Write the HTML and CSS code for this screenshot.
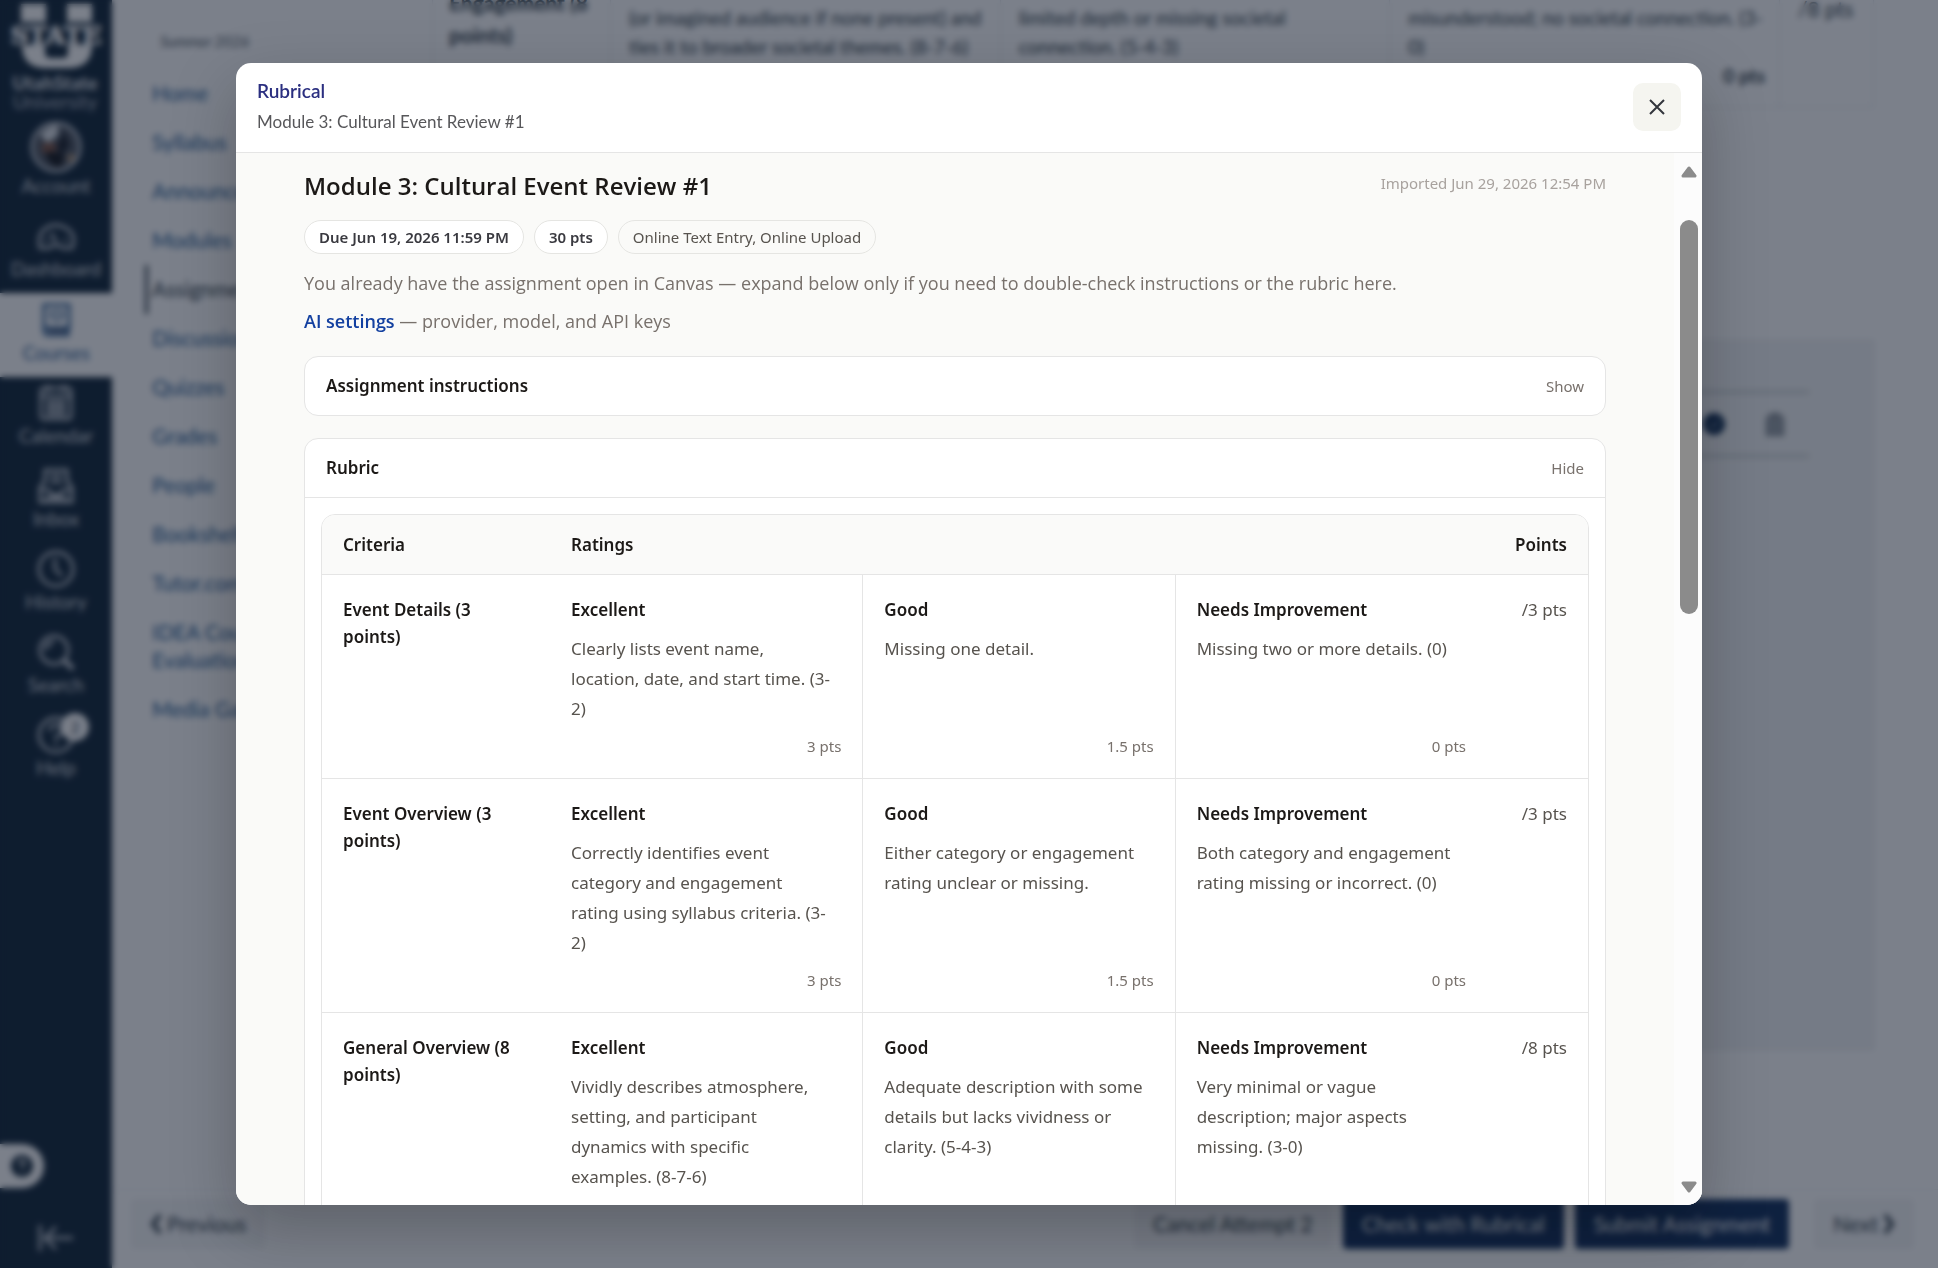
FILE: index.html
```html
<!DOCTYPE html>
<html lang="en">
<head>
<meta charset="utf-8">
<title>Rubrical</title>
<meta name="viewport" content="width=device-width, initial-scale=1">
<link rel="stylesheet" href="styles.css">
</head>
<body>
<div class="app">
  <nav class="rail" aria-label="Global">
    <a class="logo" href="#">
      <svg viewBox="0 0 112 120" width="112" height="120">
        <g fill="#fff">
          <path d="M21 4h25v18H21zM67 4h25v18H67z"/>
          <path d="M22 45h23v8q0 5 5 5h13q5 0 5-5v-8h24q0 23-24 23H46Q22 68 22 45z"/>
        </g>
        <text class="logo-state" x="56" y="44" text-anchor="middle">STATE</text>
        <text class="logo-top" x="55" y="90" text-anchor="middle">UtahState</text>
        <text class="logo-bottom" x="55" y="109" text-anchor="middle">University</text>
      </svg>
    </a>
    <a class="rail-item rail-account" href="#">
      <svg viewBox="0 0 52 52" width="52" height="52">
        <circle cx="26" cy="26" r="24" fill="#4d5560" stroke="#c3c9d2" stroke-width="3"/>
        <path d="M10 14q8-10 18-10v10l-10 8z" fill="#dfe3e8"/>
        <path d="M12 22h14v10H12z" fill="#7d5242"/>
        <path d="M15 32q8-4 20 2l-4 12q-12 0-16-14z" fill="#14161a"/>
        <path d="M34 10l6 14-8 10-6-8z" fill="#1a1f28"/>
        <circle cx="41" cy="37" r="4" fill="#a58c70"/>
      </svg>
      <span>Account</span>
    </a>
    <a class="rail-item" href="#">
      <svg viewBox="0 0 40 40" width="40" height="40" fill="none" stroke="#c9ced6" stroke-width="3">
        <path d="M4 32q-3-14 6-20t20 0 6 20h-9q-7-6-14 0z"/><path d="M20 26l-5-9M9 24h3M28 24h3"/>
      </svg>
      <span>Dashboard</span>
    </a>
    <a class="rail-item rail-active" href="#">
      <svg viewBox="0 0 40 40" width="40" height="40" fill="none" stroke="#2b5c92" stroke-width="3">
        <path d="M8 5h25v23H11q-3 0-3 3zM8 30q0 5 4 5h20v-7"/><path d="M15 12q0 8 6 8t6-8z" stroke-width="2"/><path d="M12 31h19" stroke="#3a4a6a"/>
      </svg>
      <span>Courses</span>
    </a>
    <a class="rail-item" href="#">
      <svg viewBox="0 0 40 40" width="40" height="40" fill="none" stroke="#c9ced6" stroke-width="3">
        <rect x="5" y="5" width="30" height="31" rx="3"/><path d="M5 13h30M12 2v7M28 2v7M10 19h20M10 25h20M10 31h20" /><path d="M14 17v16M20 17v16M26 17v16" stroke-width="2"/>
      </svg>
      <span>Calendar</span>
    </a>
    <a class="rail-item" href="#">
      <svg viewBox="0 0 40 40" width="40" height="40" fill="none" stroke="#c9ced6" stroke-width="3">
        <path d="M9 17V4h22v13M14 10h12M14 16h12"/><path d="M9 14l-5 8v14h32V22l-5-8M4 24h9l3 5h8l3-5h9M8 32h24"/>
      </svg>
      <span>Inbox</span>
    </a>
    <a class="rail-item" href="#">
      <svg viewBox="0 0 40 40" width="40" height="40" fill="none" stroke="#c9ced6" stroke-width="3">
        <circle cx="20" cy="20" r="17"/><path d="M19 9v11l7 7"/>
      </svg>
      <span>History</span>
    </a>
    <a class="rail-item" href="#">
      <svg viewBox="0 0 40 40" width="40" height="40" fill="none" stroke="#c9ced6" stroke-width="3">
        <circle cx="18" cy="18" r="14"/><path d="M10 18q0-8 8-8"/><path d="M28 28l9 9" stroke-width="5"/>
      </svg>
      <span>Search</span>
    </a>
    <a class="rail-item" href="#">
      <svg viewBox="0 0 40 40" width="40" height="40" fill="none" stroke="#c9ced6" stroke-width="3">
        <circle cx="20" cy="20" r="17"/><path d="M14 16q0-6 6-6t6 5q0 4-6 7v3M20 28v3"/>
      </svg>
      <span>Help</span>
      <b class="rail-badge">2</b>
    </a>
    <div class="rail-foot">
      <button class="help-tab" type="button" aria-label="Open support">
        <svg viewBox="0 0 22 22" width="22" height="22"><circle cx="11" cy="11" r="11" fill="#0f2437"/><path d="M8 9q0-4 3-4t3 3q0 2-3 4v1M11 15v2" fill="none" stroke="#fff" stroke-width="2"/></svg>
      </button>
      <button class="collapse" type="button" aria-label="Minimize navigation">
        <svg viewBox="0 0 38 28" width="38" height="28" fill="none" stroke="#c9ced6" stroke-width="3"><path d="M3 1v26M36 14H8M19 3L8 14l11 11"/></svg>
      </button>
    </div>
  </nav>

  <div class="page">
    <div class="columns">
      <nav class="course-nav" aria-label="Course">
        <p class="term">Summer 2026</p>
        <a href="#">Home</a>
        <a href="#">Syllabus</a>
        <a href="#">Announcements</a>
        <a href="#">Modules</a>
        <a href="#" class="current">Assignments</a>
        <a href="#">Discussions</a>
        <a href="#">Quizzes</a>
        <a href="#">Grades</a>
        <a href="#">People</a>
        <a href="#">Bookshelf</a>
        <a href="#">Tutor.com</a>
        <a href="#">IDEA Course<br>Evaluations</a>
        <a href="#">Media Gallery</a>
      </nav>
      <main class="content">
        <div class="back-rubric">
          <div class="back-criterion">Engagement (8<br>points)</div>
          <div class="back-rating">(or imagined audience if none present) and ties it to broader societal themes. (8-7-6)</div>
          <div class="back-rating">limited depth or missing societal<br>connection. (5-4-3)</div>
          <div class="back-rating">misunderstood; no societal connection. (3-<br>0)<b>0 pts</b></div>
          <div class="back-points">/8 pts</div>
        </div>
        <section class="submission">
          <div class="file-row">
            <svg viewBox="0 0 22 22" width="22" height="22"><circle cx="11" cy="11" r="11" fill="#0f2d52"/><path d="M6 11l4 4 6-8" fill="none" stroke="#fff" stroke-width="1"/></svg>
            <svg viewBox="0 0 20 24" width="20" height="24" fill="#a9b0b7" stroke="#6e7780" stroke-width="2"><path d="M2 8h16v15H2zM1 5h18M6 5V2h8v3M7 11v9M13 11v9"/></svg>
          </div>
        </section>
      </main>
    </div>
    <footer class="actions">
      <button class="btn" type="button"><svg viewBox="0 0 12 20" width="12" height="20" fill="none" stroke="currentColor" stroke-width="4"><path d="M10 1L3 10l7 9"/></svg>Previous</button>
      <span class="grow"></span>
      <button class="btn" type="button">Cancel Attempt 2</button>
      <button class="btn btn-primary" type="button">Check with Rubrical</button>
      <button class="btn btn-primary" type="button">Submit Assignment</button>
      <button class="btn btn-next" type="button">Next<svg viewBox="0 0 12 20" width="12" height="20" fill="none" stroke="currentColor" stroke-width="4"><path d="M2 1l7 9-7 9"/></svg></button>
    </footer>
  </div>
</div>

<div class="backdrop">
  <div class="dialog" role="dialog" aria-modal="true" aria-labelledby="dialog-title">
    <header class="dialog-head">
      <div class="dialog-titles">
        <h1 id="dialog-title">Rubrical</h1>
        <p>Module 3: Cultural Event Review #1</p>
      </div>
      <button class="close" type="button" aria-label="Close">
        <svg viewBox="0 0 16 16" width="16" height="16" fill="none" stroke="#33363d" stroke-width="2"><path d="M1 1l14 14M15 1L1 15"/></svg>
      </button>
    </header>
    <div class="dialog-body">
      <div class="scroller">
        <article class="assignment">
          <div class="title-row">
            <h2>Module 3: Cultural Event Review #1</h2>
            <span class="imported">Imported Jun 29, 2026 12:54 PM</span>
          </div>
          <ul class="pills">
            <li>Due Jun 19, 2026 11:59 PM</li>
            <li>30 pts</li>
            <li class="pill-plain">Online Text Entry, Online Upload</li>
          </ul>
          <p class="note">You already have the assignment open in Canvas — expand below only if you need to double-check instructions or the rubric here.</p>
          <p class="note"><a href="#">AI settings</a> — provider, model, and API keys</p>

          <section class="card">
            <button class="card-head" type="button" aria-expanded="false"><strong>Assignment instructions</strong><span>Show</span></button>
          </section>

          <section class="card">
            <button class="card-head" type="button" aria-expanded="true"><strong>Rubric</strong><span>Hide</span></button>
            <div class="card-body">
              <div class="table-frame">
                <table class="rubric">
                  <colgroup><col class="col-criteria"><col><col><col><col class="col-points"></colgroup>
                  <thead>
                    <tr><th scope="col">Criteria</th><th scope="col" colspan="3">Ratings</th><th scope="col" class="points">Points</th></tr>
                  </thead>
                  <tbody>
                    <tr>
                      <th scope="row">Event Details (3 points)</th>
                      <td><div class="rating"><h3>Excellent</h3><p>Clearly lists event name,<br>location, date, and start time. (3-<br>2)</p><span>3 pts</span></div></td>
                      <td><div class="rating"><h3>Good</h3><p>Missing one detail.</p><span>1.5 pts</span></div></td>
                      <td><div class="rating"><h3>Needs Improvement</h3><p>Missing two or more details. (0)</p><span>0 pts</span></div></td>
                      <td class="points">/3 pts</td>
                    </tr>
                    <tr>
                      <th scope="row">Event Overview (3 points)</th>
                      <td><div class="rating"><h3>Excellent</h3><p>Correctly identifies event<br>category and engagement<br>rating using syllabus criteria. (3-<br>2)</p><span>3 pts</span></div></td>
                      <td><div class="rating"><h3>Good</h3><p>Either category or engagement rating unclear or missing.</p><span>1.5 pts</span></div></td>
                      <td><div class="rating"><h3>Needs Improvement</h3><p>Both category and engagement rating missing or incorrect. (0)</p><span>0 pts</span></div></td>
                      <td class="points">/3 pts</td>
                    </tr>
                    <tr>
                      <th scope="row">General Overview (8 points)</th>
                      <td><div class="rating rating-tall"><h3>Excellent</h3><p>Vividly describes atmosphere,<br>setting, and participant<br>dynamics with specific<br>examples. (8-7-6)</p></div></td>
                      <td><div class="rating"><h3>Good</h3><p>Adequate description with some details but lacks vividness or clarity. (5-4-3)</p></div></td>
                      <td><div class="rating"><h3>Needs Improvement</h3><p>Very minimal or vague description; major aspects missing. (3-0)</p></div></td>
                      <td class="points">/8 pts</td>
                    </tr>
                  </tbody>
                </table>
              </div>
            </div>
          </section>
        </article>
      </div>
      <div class="scrollbar" aria-hidden="true">
        <svg viewBox="0 0 16 12" width="16" height="12"><path d="M8 2l6 8H2z" fill="#8b8b8b" stroke="#8b8b8b" stroke-width="3" stroke-linejoin="round"/></svg>
        <div class="track"><div class="thumb"></div></div>
        <svg viewBox="0 0 16 12" width="16" height="12"><path d="M8 10l6-8H2z" fill="#8b8b8b" stroke="#8b8b8b" stroke-width="3" stroke-linejoin="round"/></svg>
      </div>
    </div>
  </div>
</div>
</body>
</html>
```
FILE: styles.css
```css
* { box-sizing: border-box; }

body {
  margin: 0;
  background: #fff;
  font-family: Lato, "Liberation Sans", sans-serif;
  overflow: hidden;
}

h1, h2, h3, p, ul { margin: 0; padding: 0; }
a { color: inherit; text-decoration: none; }
button { font: inherit; color: inherit; border: 0; background: none; padding: 0; }

/* Page behind the dialog */
.app {
  display: flex;
  height: calc(100vh - 1px);
  overflow: hidden;
}

.rail {
  flex: none;
  display: flex;
  flex-direction: column;
  width: 112px;
  background: #0f2437;
  color: #d5d9df;
  font-size: 19px;
}
.logo { height: 120px; flex: none; }
.logo-state {
  font: 700 25px "DejaVu Serif", serif;
  fill: #fff;
  stroke: #fff;
  stroke-width: 1px;
}
.logo-top { font: 900 19px Lato, sans-serif; fill: #d5d9df; }
.logo-bottom { font: 400 19px Lato, sans-serif; fill: #aeb5c0; }

.rail-item {
  position: relative;
  flex: none;
  display: flex;
  flex-direction: column;
  align-items: center;
  gap: 2px;
  height: 83px;
  padding-top: 6px;
  line-height: 22px;
}
.rail-account { height: 90px; padding-top: 1px; }
.rail-active { background: #fff; color: #2b5c92; height: 84px; padding-top: 7px; }
.rail-badge {
  position: absolute;
  top: 4px;
  right: 23px;
  width: 28px;
  height: 28px;
  border-radius: 50%;
  background: #fff;
  color: #0f2437;
  font-size: 15px;
  font-weight: 400;
  line-height: 28px;
  text-align: center;
}
.rail-foot {
  margin-top: auto;
  display: flex;
  flex-direction: column;
  align-items: flex-start;
  gap: 36px;
  padding-bottom: 16px;
}
.help-tab {
  display: flex;
  align-items: center;
  width: 44px;
  height: 44px;
  padding-left: 11px;
  border-radius: 0 22px 22px 0;
  background: #fff;
}
.collapse { align-self: center; height: 28px; }

.page { flex: 1; display: flex; flex-direction: column; min-width: 0; }
.columns { flex: 1; display: flex; min-height: 0; overflow: hidden; }

.course-nav {
  flex: none;
  width: 320px;
  padding: 31px 33px 0;
  color: #235a92;
  font-size: 21px;
  line-height: 28px;
}
.course-nav a {
  display: block;
  padding: 10px 0 11px 7px;
}
.course-nav .current {
  border-left: 3px solid #2d3b45;
  padding-left: 4px;
  color: #2d3b45;
}
.term {
  padding-left: 15px;
  margin-bottom: 18px;
  color: #4a5560;
  font-size: 15px;
  font-style: italic;
  line-height: 20px;
}

.content { flex: 1; min-width: 0; padding-right: 64px; }
.back-rubric {
  display: grid;
  grid-template-columns: 177px 1fr 1fr 1fr 94px;
  height: 128px;
  margin-top: -20px;
  border: 1px solid #e4e7ea;
  color: #2d3b45;
  font-size: 19px;
  line-height: 29px;
}
.back-rubric > div + div { border-left: 1px solid #e4e7ea; }
.back-criterion { padding: 6px 16px; font-size: 21px; font-weight: 700; line-height: 32px; }
.back-rating { padding: 22px 14px 0 18px; }
.back-rating b { display: block; text-align: right; }
.back-points { padding: 13px 18px; font-size: 21px; }

.submission {
  margin-top: 232px;
  height: 710px;
  padding: 50px 64px;
  border: 1px solid #e4e7ea;
  background: #f2f4f5;
}
.file-row {
  display: flex;
  justify-content: flex-end;
  align-items: center;
  gap: 40px;
  height: 66px;
  padding-right: 24px;
  border: solid #b4bbc0;
  border-width: 2px 0;
}

.actions {
  flex: none;
  display: flex;
  align-items: center;
  gap: 11px;
  height: 79px;
  padding: 0 24px 11px 19px;
  border-top: 1px solid #f0f1f2;
}
.grow { flex: 1; }
.btn {
  display: flex;
  align-items: center;
  gap: 5px;
  height: 50px;
  padding: 0 19px;
  border-radius: 4px;
  background: #f4f5f6;
  color: #2d3b45;
  font-size: 21px;
}
.btn-primary { background: #0f2d5a; color: #fff; }
.btn-next { margin-left: 14px; }

/* Dialog */
.backdrop {
  position: fixed;
  inset: 0 0 1px;
  display: flex;
  align-items: center;
  justify-content: center;
  background: rgba(15, 23, 42, .55);
  backdrop-filter: blur(3px);
  overflow: hidden;
}
.dialog {
  display: flex;
  flex-direction: column;
  width: calc(100% - 48px);
  max-width: 1466px;
  height: 90vh;
  border-radius: 15px;
  background: #fff;
  box-shadow: 0 24px 64px rgba(0, 0, 0, .25);
  overflow: hidden;
}
.dialog-head {
  flex: none;
  display: flex;
  justify-content: space-between;
  align-items: center;
  height: 90px;
  padding: 0 21px;
  border-bottom: 1px solid #e5e5e5;
}
.dialog-titles { padding-bottom: 3px; }
.dialog-head h1 {
  color: #2b2f80;
  font-size: 19px;
  font-weight: 600;
  line-height: 28px;
}
.dialog-head p {
  margin-top: 4px;
  color: #57575a;
  font-size: 17px;
  line-height: 26px;
}
.close {
  display: flex;
  align-items: center;
  justify-content: center;
  width: 48px;
  height: 48px;
  border-radius: 10px;
  background: #f5f5f0;
}

.dialog-body {
  flex: 1;
  display: flex;
  min-height: 0;
  background: #fafaf8;
  color: #1c1917;
  font-family: "Noto Sans", "Open Sans", sans-serif;
  font-size: 17px;
}
.scroller {
  flex: 1;
  min-width: 0;
  overflow: auto;
  scrollbar-width: none;
}
.assignment {
  max-width: 1302px;
  margin: 0 auto;
  padding-top: 15px;
}
.title-row { display: flex; justify-content: space-between; }
.title-row h2 {
  font-family: "Open Sans", "Noto Sans", sans-serif;
  font-size: 24px;
  font-weight: 600;
  line-height: 36px;
}
.imported { color: #a8a29e; font-size: 15px; line-height: 30px; }

.pills {
  display: flex;
  gap: 10px;
  margin-top: 16px;
  list-style: none;
}
.pills li {
  height: 34px;
  padding: 0 14px;
  border: 1px solid #e5e5e2;
  border-radius: 17px;
  background: #fff;
  color: #3a3a40;
  font-size: 15px;
  font-weight: 600;
  line-height: 32px;
}
.pills .pill-plain { background: none; color: #57534e; font-weight: 400; }

.note {
  margin-top: 15px;
  color: #78716c;
  font-family: "Open Sans", "Noto Sans", sans-serif;
  font-size: 18px;
  line-height: 28px;
}
.note + .note { margin-top: 10px; }
.note a { color: #1340a0; font-weight: 600; }

.card {
  margin-top: 22px;
  border: 1px solid #e5e5e5;
  border-radius: 14px;
  background: #fff;
}
.note + .card { margin-top: 21px; }
.card-head {
  display: flex;
  justify-content: space-between;
  align-items: center;
  width: 100%;
  height: 58px;
  padding: 0 21px;
}
.card-head strong { font-weight: 600; }
.card-head span { color: #78716c; font-size: 15px; }
.card-body { padding: 16px; border-top: 1px solid #e5e5e5; }

.table-frame {
  border: 1px solid #e5e5e5;
  border-radius: 14px;
  overflow: hidden;
}
.rubric {
  width: 100%;
  height: 1px;
  table-layout: fixed;
  border-collapse: separate;
  border-spacing: 0;
  line-height: 27px;
}
.col-criteria { width: 228px; }
.col-points { width: 101px; }
.rubric th, .rubric td {
  padding: 21px;
  font-weight: 400;
  text-align: left;
  vertical-align: top;
  border-bottom: 1px solid #e5e5e5;
}
.rubric th { font-weight: 600; }
.rubric thead th { padding: 16px 21px; background: #fafaf9; }
.rubric tbody td { height: 100%; padding-bottom: 20px; }
.rubric td + td:not(.points) { border-left: 1px solid #e5e5e5; }
.rubric .points { padding-left: 0; text-align: right; white-space: nowrap; }
.rubric td.points { color: #57534e; }
.rating { display: flex; flex-direction: column; height: 100%; }
.rating h3 { font-size: 17px; font-weight: 600; line-height: 27px; }
.rating p { margin: 11px 0 10px; color: #57534e; line-height: 30px; }
.rating span {
  margin-top: auto;
  color: #78716c;
  font-size: 15px;
  line-height: 24px;
  text-align: right;
}
.rating-tall { padding-bottom: 40px; }

.scrollbar {
  flex: none;
  display: flex;
  flex-direction: column;
  align-items: center;
  width: 28px;
  padding: 13px 0 12px 2px;
  background: #fcfcfc;
}
.track { flex: 1; width: 18px; padding-top: 42px; }
.thumb { height: 41%; border-radius: 9px; background: #8b8b8b; }
```
